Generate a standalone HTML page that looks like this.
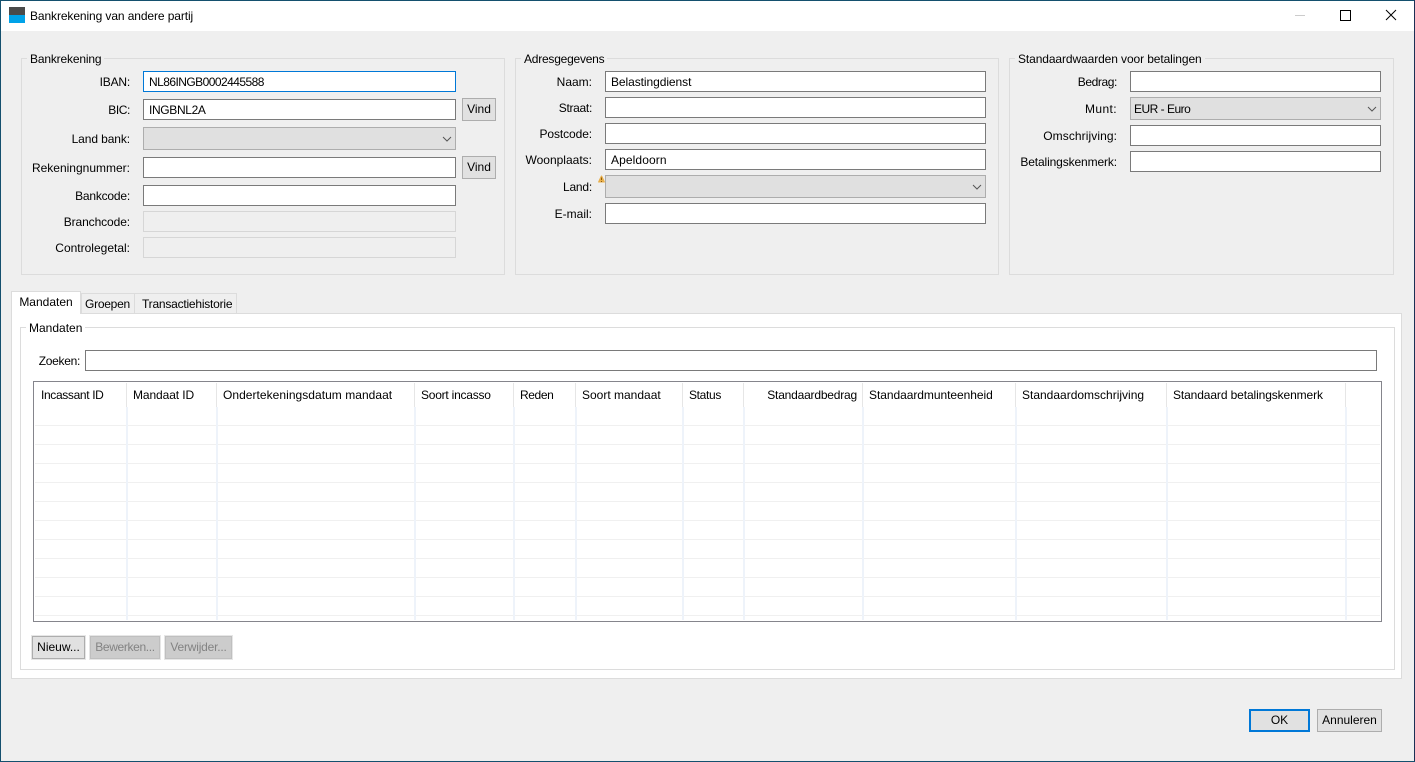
<!DOCTYPE html>
<html lang="nl"><head><meta charset="utf-8"><title>Bankrekening van andere partij</title>
<style>
html,body{margin:0;padding:0;width:1415px;height:762px;overflow:hidden;background:#efefef}
body{position:relative;font:12px/16px "Liberation Sans",sans-serif;color:#000}
div,span{position:absolute;box-sizing:border-box;white-space:nowrap}
.g{border:1px solid #dcdcdc}
.lg{height:16px;padding:0 3px;background:#efefef}
.l{text-align:right;height:16px}
.i{background:#fff;border:1px solid #7a7a7a;height:21px;padding:2px 5px 0}
.d{background:#efefef;border:1px solid #d6d6d6;height:21px}
.c{background:#e0e0e0;border:1px solid #adadad;height:23px;padding:3px 3px 0}
.b{background:#e1e1e1;border:1px solid #adadad;height:23px;text-align:center;line-height:21px}
.x{background:#ccc;border:1px solid #bfbfbf;height:23px;text-align:center;line-height:21px;color:#838383;outline:1px solid #e6e6e6}
.t{height:16px;top:387px}
.hs{top:383px;width:1px;height:24px;background:#e6e6e6}
.bs{top:407px;width:2px;height:213px;background:#eef3fa}
.r{left:35px;width:1345px;height:1px;background:#f0f0f0}
</style></head><body>
<div style="left:0;top:0;width:1415px;height:31px;background:#fff"></div>
<div style="left:0;top:0;width:1415px;height:1px;background:#14506e"></div>
<div style="left:0;top:0;width:1px;height:762px;background:#14506e"></div>
<div style="left:1414px;top:0;width:1px;height:762px;background:#1b2f55"></div>
<div style="left:0;top:761px;width:1415px;height:1px;background:#14506e"></div>
<div style="left:9px;top:7px;width:16px;height:8px;background:#4a4a4a"></div>
<div style="left:9px;top:15px;width:16px;height:8px;background:#00a2e8"></div>
<div style="left:30px;top:8px;letter-spacing:-.1px">Bankrekening van andere partij</div>
<svg style="position:absolute;left:1280px;top:0" width="135" height="32" fill="none"><path d="M15 15.500H25" stroke="#ccc"/><path d="M60.500 10.500H70.500V20.500H60.500Z" stroke="#000"/><path d="M106 10L116 20M116 10L106 20" stroke="#000"/></svg>

<div class="g" style="left:21px;top:58px;width:484px;height:217px"></div>
<div class="lg" style="left:27px;top:51px;letter-spacing:-.17px">Bankrekening</div>
<div class="l" style="left:30px;width:100px;top:74px;letter-spacing:-.2px">IBAN:</div>
<div class="i" style="left:143px;top:71px;width:313px;border-color:#0078d7;letter-spacing:-.55px">NL86INGB0002445588</div>
<div class="l" style="left:30px;width:100px;top:102px;letter-spacing:-.4px">BIC:</div>
<div class="i" style="left:143px;top:99px;width:313px;letter-spacing:-.35px">INGBNL2A</div>
<div class="b" style="left:462px;top:98px;width:34px">Vind</div>
<div class="l" style="left:30px;width:100px;top:131px;letter-spacing:-.1px">Land bank:</div>
<div class="c" style="left:143px;top:127px;width:313px"></div>
<svg style="position:absolute;left:442px;top:135px" width="10" height="8" fill="none"><path d="M1 2L5 6L9 2" stroke="#555"/></svg>
<div class="l" style="left:20px;width:110px;top:160px">Rekeningnummer:</div>
<div class="i" style="left:143px;top:157px;width:313px"></div>
<div class="b" style="left:462px;top:156px;width:34px">Vind</div>
<div class="l" style="left:30px;width:100px;top:188px;letter-spacing:-.2px">Bankcode:</div>
<div class="i" style="left:143px;top:185px;width:313px"></div>
<div class="l" style="left:30px;width:100px;top:214px;letter-spacing:-.1px">Branchcode:</div>
<div class="d" style="left:143px;top:211px;width:313px"></div>
<div class="l" style="left:30px;width:100px;top:240px">Controlegetal:</div>
<div class="d" style="left:143px;top:237px;width:313px"></div>

<div class="g" style="left:515px;top:58px;width:484px;height:217px"></div>
<div class="lg" style="left:521px;top:51px;letter-spacing:-.23px">Adresgegevens</div>
<div class="l" style="left:500px;width:92px;top:74px">Naam:</div>
<div class="i" style="left:605px;top:71px;width:381px;letter-spacing:-.07px">Belastingdienst</div>
<div class="l" style="left:500px;width:92px;top:100px;letter-spacing:-.3px">Straat:</div>
<div class="i" style="left:605px;top:97px;width:381px"></div>
<div class="l" style="left:500px;width:92px;top:126px;letter-spacing:-.1px">Postcode:</div>
<div class="i" style="left:605px;top:123px;width:381px"></div>
<div class="l" style="left:500px;width:92px;top:152px">Woonplaats:</div>
<div class="i" style="left:605px;top:149px;width:381px;letter-spacing:.1px">Apeldoorn</div>
<div class="l" style="left:500px;width:92px;top:179px;letter-spacing:-.2px">Land:</div>
<div class="c" style="left:605px;top:175px;width:381px"></div>
<svg style="position:absolute;left:598px;top:175px" width="8" height="9"><path d="M3.500 .5C4 .5 4.300 1 7 7Q7 7.500 6.500 7.500H.5Q0 7.500 0 7C2.700 1 3 .5 3.500 .5Z" fill="#e9b04c"/><path d="M3.500 2.500V5M3.500 6V7" stroke="#8a5a10"/></svg>
<svg style="position:absolute;left:972px;top:183px" width="10" height="8" fill="none"><path d="M1 2L5 6L9 2" stroke="#555"/></svg>
<div class="l" style="left:500px;width:92px;top:206px">E-mail:</div>
<div class="i" style="left:605px;top:203px;width:381px"></div>

<div class="g" style="left:1009px;top:58px;width:385px;height:217px"></div>
<div class="lg" style="left:1015px;top:51px;letter-spacing:-.1px">Standaardwaarden voor betalingen</div>
<div class="l" style="left:1010px;width:107px;top:74px;letter-spacing:-.4px">Bedrag:</div>
<div class="i" style="left:1130px;top:71px;width:251px"></div>
<div class="l" style="left:1010px;width:107px;top:101px;letter-spacing:.4px">Munt:</div>
<div class="c" style="left:1130px;top:97px;width:251px;letter-spacing:-.5px">EUR - Euro</div>
<svg style="position:absolute;left:1367px;top:105px" width="10" height="8" fill="none"><path d="M1 2L5 6L9 2" stroke="#555"/></svg>
<div class="l" style="left:1010px;width:107px;top:128px;letter-spacing:.08px">Omschrijving:</div>
<div class="i" style="left:1130px;top:125px;width:251px"></div>
<div class="l" style="left:1010px;width:107px;top:154px;letter-spacing:-.12px">Betalingskenmerk:</div>
<div class="i" style="left:1130px;top:151px;width:251px"></div>

<div style="left:11px;top:313px;width:1391px;height:366px;background:#fff;border:1px solid #dcdcdc"></div>
<div style="left:81px;top:293px;width:54px;height:21px;background:#efefef;border:1px solid #dcdcdc;padding-left:3px;line-height:21px;letter-spacing:-.25px">Groepen</div>
<div style="left:135px;top:293px;width:102px;height:21px;background:#efefef;border:1px solid #dcdcdc;border-left:0;padding-left:7px;line-height:21px;letter-spacing:-.22px">Transactiehistorie</div>
<div style="left:11px;top:291px;width:70px;height:23px;background:#fff;border:1px solid #dcdcdc;border-bottom:0;text-align:center;line-height:20px">Mandaten</div>

<div style="left:20px;top:327px;width:1375px;height:343px;border:1px solid #dcdcdc"></div>
<div class="lg" style="left:26px;top:320px;background:#fff">Mandaten</div>
<div class="l" style="left:30px;width:50px;top:353px;letter-spacing:-.3px">Zoeken:</div>
<div class="i" style="left:85px;top:350px;width:1292px"></div>

<div style="left:33px;top:381px;width:1349px;height:241px;border:1px solid #85858c;background:#fff"></div>
<div class="r" style="top:425px"></div><div class="r" style="top:444px"></div><div class="r" style="top:463px"></div><div class="r" style="top:482px"></div><div class="r" style="top:501px"></div><div class="r" style="top:520px"></div><div class="r" style="top:539px"></div><div class="r" style="top:558px"></div><div class="r" style="top:577px"></div><div class="r" style="top:596px"></div><div class="r" style="top:615px"></div>
<div class="hs" style="left:126px"></div><div class="bs" style="left:126px"></div>
<div class="hs" style="left:216px"></div><div class="bs" style="left:216px"></div>
<div class="hs" style="left:414px"></div><div class="bs" style="left:414px"></div>
<div class="hs" style="left:513px"></div><div class="bs" style="left:513px"></div>
<div class="hs" style="left:575px"></div><div class="bs" style="left:575px"></div>
<div class="hs" style="left:682px"></div><div class="bs" style="left:682px"></div>
<div class="hs" style="left:743px"></div><div class="bs" style="left:743px"></div>
<div class="hs" style="left:862px"></div><div class="bs" style="left:862px"></div>
<div class="hs" style="left:1015px"></div><div class="bs" style="left:1015px"></div>
<div class="hs" style="left:1166px"></div><div class="bs" style="left:1166px"></div>
<div class="hs" style="left:1345px"></div><div class="bs" style="left:1345px"></div>
<div class="t" style="left:41px;letter-spacing:-.35px">Incassant ID</div>
<div class="t" style="left:133px;letter-spacing:-.1px">Mandaat ID</div>
<div class="t" style="left:223px;letter-spacing:.04px">Ondertekeningsdatum mandaat</div>
<div class="t" style="left:421px;letter-spacing:-.23px">Soort incasso</div>
<div class="t" style="left:520px;letter-spacing:-.4px">Reden</div>
<div class="t" style="left:582px">Soort mandaat</div>
<div class="t" style="left:689px;letter-spacing:-.33px">Status</div>
<div class="t" style="left:757px;width:100px;text-align:right;letter-spacing:-.2px">Standaardbedrag</div>
<div class="t" style="left:869px;letter-spacing:-.05px">Standaardmunteenheid</div>
<div class="t" style="left:1022px">Standaardomschrijving</div>
<div class="t" style="left:1173px;letter-spacing:-.11px">Standaard betalingskenmerk</div>

<div class="b" style="left:32px;top:636px;width:53px;outline:1px solid #e6e6e6">Nieuw...</div>
<div class="x" style="left:90px;top:636px;width:70px;letter-spacing:-.35px">Bewerken...</div>
<div class="x" style="left:165px;top:636px;width:67px;letter-spacing:-.2px">Verwijder...</div>
<div class="b" style="left:1249px;top:709px;width:61px;border:2px solid #0078d7;line-height:19px">OK</div>
<div class="b" style="left:1317px;top:709px;width:65px">Annuleren</div>
</body></html>
